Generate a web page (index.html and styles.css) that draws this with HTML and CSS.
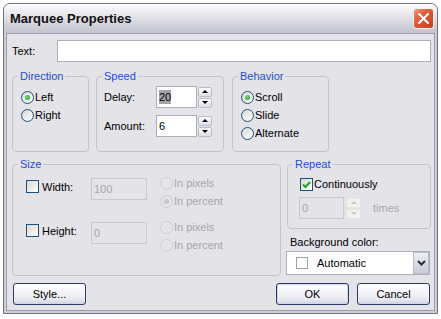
FILE: index.html
```html
<!DOCTYPE html>
<html lang="en">
   <head>
      <meta charset="UTF-8">
      <meta name="viewport" content="width=device-width, initial-scale=1.0">
      <link rel="stylesheet" href="styles.css">
      <title>Marquee Properties</title>
   </head>
   <body>
      <div class="window">
         <div class="titlebar">
            <span class="title">Marquee Properties</span>
            <span class="close">
               <svg width="21" height="21" viewBox="0 0 21 21">
                  <defs>
                     <linearGradient id="red" x1="0" y1="0" x2="1" y2="1">
                        <stop offset="0" stop-color="#f0a08a"/>
                        <stop offset="0.35" stop-color="#e2613f"/>
                        <stop offset="1" stop-color="#c23c1c"/>
                     </linearGradient>
                  </defs>
                  <rect x="0.5" y="0.5" width="20" height="20" rx="3" fill="url(#red)" stroke="#f4f4f8"/>
                  <path d="M6 6 L15 15 M15 6 L6 15" stroke="#fff" stroke-width="2" stroke-linecap="round"/>
               </svg>
            </span>
         </div>
         <div class="client">
            <div class="text-row">
               <span class="label">Text:</span>
               <div class="field grow"></div>
            </div>

            <div class="groups-row">
               <div class="group direction">
                  <span class="legend">Direction</span>
                  <div class="group-body">
                     <div class="radio"><span class="dot on"></span>Left</div>
                     <div class="radio"><span class="dot"></span>Right</div>
                  </div>
               </div>
               <div class="group speed">
                  <span class="legend">Speed</span>
                  <div class="group-body">
                     <div class="spin-row">
                        <span class="spin-label">Delay:</span>
                        <div class="field small"><span class="sel">20</span></div>
                        <div class="spin">
                           <span class="arrow up"></span>
                           <span class="arrow down"></span>
                        </div>
                     </div>
                     <div class="spin-row second">
                        <span class="spin-label">Amount:</span>
                        <div class="field small">6</div>
                        <div class="spin">
                           <span class="arrow up"></span>
                           <span class="arrow down"></span>
                        </div>
                     </div>
                  </div>
               </div>
               <div class="group behavior">
                  <span class="legend">Behavior</span>
                  <div class="group-body">
                     <div class="radio"><span class="dot on"></span>Scroll</div>
                     <div class="radio"><span class="dot"></span>Slide</div>
                     <div class="radio"><span class="dot"></span>Alternate</div>
                  </div>
               </div>
            </div>

            <div class="mid-row">
               <div class="group size">
                  <span class="legend">Size</span>
                  <div class="group-body">
                     <div class="size-row">
                        <div class="check-label"><span class="box"></span>Width:</div>
                        <div class="field off size-field">100</div>
                        <div class="radio-stack">
                           <div class="radio off"><span class="dot"></span>In pixels</div>
                           <div class="radio off"><span class="dot on"></span>In percent</div>
                        </div>
                     </div>
                     <div class="size-row">
                        <div class="check-label"><span class="box"></span>Height:</div>
                        <div class="field off size-field">0</div>
                        <div class="radio-stack">
                           <div class="radio off"><span class="dot"></span>In pixels</div>
                           <div class="radio off"><span class="dot"></span>In percent</div>
                        </div>
                     </div>
                  </div>
               </div>
               <div class="right-col">
                  <div class="group repeat">
                     <span class="legend">Repeat</span>
                     <div class="group-body">
                        <div class="check-row">
                           <span class="box">
                              <svg width="11" height="11" viewBox="0 0 11 11">
                                 <path d="M2 5.5 L4.5 8 L9 3" fill="none" stroke="#21a121" stroke-width="2"/>
                              </svg>
                           </span>Continuously
                        </div>
                        <div class="times-row">
                           <div class="field off times-field">0</div>
                           <div class="spin off">
                              <span class="arrow up"></span>
                              <span class="arrow down"></span>
                           </div>
                           <span class="times">times</span>
                        </div>
                     </div>
                  </div>
                  <div class="bg-label">Background color:</div>
                  <div class="select">
                     <span class="swatch"></span>
                     <span class="select-text">Automatic</span>
                     <span class="drop">
                        <svg width="9" height="6" viewBox="0 0 9 6">
                           <path d="M1 1 L4.5 4.5 L8 1" fill="none" stroke="#2b2b3a" stroke-width="2"/>
                        </svg>
                     </span>
                  </div>
               </div>
            </div>

            <div class="buttons-row">
               <button class="btn style-btn">Style...</button>
               <button class="btn ok">OK</button>
               <button class="btn cancel">Cancel</button>
            </div>
         </div>
      </div>
   </body>
</html>
```

FILE: styles.css
```css
body {
margin: 0;
background: #fff;
font-family: "Liberation Sans", Arial, sans-serif;
font-size: 11px;
color: #000;
}
.window {
margin: 3px 0 0 3px;
width: 435px;
height: 311px;
box-sizing: border-box;
border: 1px solid #72727f;
border-radius: 7px 7px 0 0;
background: #cdcdd7;
padding: 0 2px 2px;
display: flex;
flex-direction: column;
}
.titlebar {
height: 29px;
flex: none;
margin: 0 -2px;
padding: 0 3px 0 6px;
display: flex;
align-items: center;
justify-content: space-between;
border-radius: 6px 6px 0 0;
background: linear-gradient(#fdfdfe, #ebebf0 30%, #d3d3dd 70%, #c3c3cf);
}
.title {
font-size: 13px;
font-weight: bold;
color: #111;
}
.close {
display: flex;
}
.client {
flex: 1;
border: 1px solid #9d9daa;
background: #e3e3e8;
padding: 6px 3px 0 5px;
}
.text-row {
display: flex;
align-items: center;
height: 22px;
}
.label {
width: 45px;
}
.field {
box-sizing: border-box;
height: 22px;
border: 1px solid #a9afbb;
background: #fff;
padding-left: 2px;
display: flex;
align-items: center;
}
.field.grow {
flex: 1;
}
.field.off {
background: #e3e3e8;
border-color: #c9c9cf;
color: #a6a6ad;
}
.sel {
background: #a3a3ab;
line-height: 14px;
}

/* group boxes */
.groups-row {
display: flex;
margin-top: 14px;
height: 76px;
}
.group {
box-sizing: border-box;
border: 1px solid #c4c4cb;
border-radius: 4px;
}
.legend {
display: block;
width: max-content;
line-height: 12px;
margin: -7px 0 -5px 5px;
padding: 0 2px;
background: #e3e3e8;
color: #1d4ed0;
}
.direction {
width: 77px;
}
.speed {
width: 128px;
margin-left: 7px;
}
.behavior {
width: 97px;
margin-left: 8px;
}
.direction .group-body,
.behavior .group-body {
padding: 11px 0 0 8px;
}
.speed .group-body {
padding: 9px 0 0 7px;
}

/* radios and checks */
.radio {
display: flex;
align-items: center;
height: 18px;
}
.dot {
box-sizing: border-box;
width: 13px;
height: 13px;
margin-right: 1px;
border: 1px solid #1c5180;
border-radius: 50%;
background: linear-gradient(135deg, #d8d8d4, #fff);
display: flex;
align-items: center;
justify-content: center;
}
.dot.on::after {
content: "";
width: 5px;
height: 5px;
border-radius: 50%;
background: radial-gradient(circle at 35% 35%, #7ad47a, #21a121);
}
.radio.off {
color: #a6a6ad;
}
.radio.off .dot {
border-color: #cfcfd3;
background: #e3e3e8;
}
.radio.off .dot.on::after {
background: #c6c6cb;
}
.box {
box-sizing: border-box;
width: 13px;
height: 13px;
border: 1px solid #1c5180;
background: linear-gradient(135deg, #d8d8d4, #fff);
display: flex;
align-items: center;
justify-content: center;
}

/* spin boxes */
.spin-row {
display: flex;
align-items: center;
height: 22px;
}
.spin-row.second {
margin-top: 7px;
}
.spin-label {
width: 52px;
}
.field.small {
width: 41px;
}
.spin {
width: 14px;
height: 22px;
margin-left: 1px;
display: flex;
flex-direction: column;
justify-content: center;
gap: 1px;
}
.arrow {
box-sizing: border-box;
height: 10px;
border: 1px solid #b9bccb;
border-radius: 2px;
background: linear-gradient(#fdfdff, #dcdde8);
display: flex;
align-items: center;
justify-content: center;
}
.arrow::after {
content: "";
border-left: 3px solid transparent;
border-right: 3px solid transparent;
}
.arrow.up::after {
border-bottom: 3px solid #000;
}
.arrow.down::after {
border-top: 3px solid #000;
}
.spin.off .arrow {
border-color: #e6e6e0;
background: #f1f1ee;
}
.spin.off .arrow.up::after {
border-bottom-color: #c9c9c4;
}
.spin.off .arrow.down::after {
border-top-color: #c9c9c4;
}

/* size and repeat */
.mid-row {
display: flex;
margin-top: 12px;
}
.size {
width: 269px;
height: 112px;
}
.size .group-body {
padding: 9px 0 0 13px;
}
.size-row {
display: flex;
align-items: flex-start;
height: 44px;
}
.check-label {
display: flex;
align-items: center;
gap: 3px;
width: 65px;
height: 13px;
margin-top: 6px;
}
.size-field {
width: 56px;
margin-top: 4px;
}
.radio-stack {
margin-left: 13px;
}
.right-col {
width: 144px;
margin-left: 6px;
}
.repeat {
height: 65px;
}
.repeat .group-body {
padding: 10px 0 0 12px;
}
.check-row {
display: flex;
align-items: center;
gap: 1px;
height: 18px;
}
.times-row {
display: flex;
align-items: center;
margin-top: 4px;
}
.times-field {
width: 45px;
margin-left: -1px;
}
.spin.off {
width: 15px;
margin-left: 2px;
}
.times {
margin-left: 12px;
color: #a6a6ad;
}
.bg-label {
margin-top: 7px;
line-height: 13px;
padding-left: 3px;
}
.select {
box-sizing: border-box;
display: flex;
align-items: center;
width: 144px;
height: 24px;
margin: 2px 0 0 -1px;
border: 1px solid #a9afbb;
background: #fff;
}
.swatch {
box-sizing: border-box;
width: 12px;
height: 12px;
margin-left: 9px;
border: 1px solid #a0a0a6;
}
.select-text {
margin-left: 9px;
}
.drop {
box-sizing: border-box;
width: 16px;
height: 22px;
margin-left: auto;
border: 1px solid #b9bccb;
background: linear-gradient(#eeeef4, #c9cad6);
display: flex;
align-items: center;
justify-content: center;
}

/* buttons */
.buttons-row {
display: flex;
margin-top: 7px;
}
.btn {
box-sizing: border-box;
width: 73px;
height: 22px;
padding: 0;
font-family: inherit;
font-size: 11px;
color: #000;
border: 1px solid #2c3a69;
border-radius: 3px;
background: linear-gradient(#ffffff, #f4f4f8 45%, #e6e6ee 80%, #cfd2e2);
}
.style-btn {
margin-left: 1px;
}
.ok {
margin-left: auto;
box-shadow: inset 0 0 0 1px #c8d6f0;
}
.cancel {
margin: 0 1px 0 8px;
}
```
